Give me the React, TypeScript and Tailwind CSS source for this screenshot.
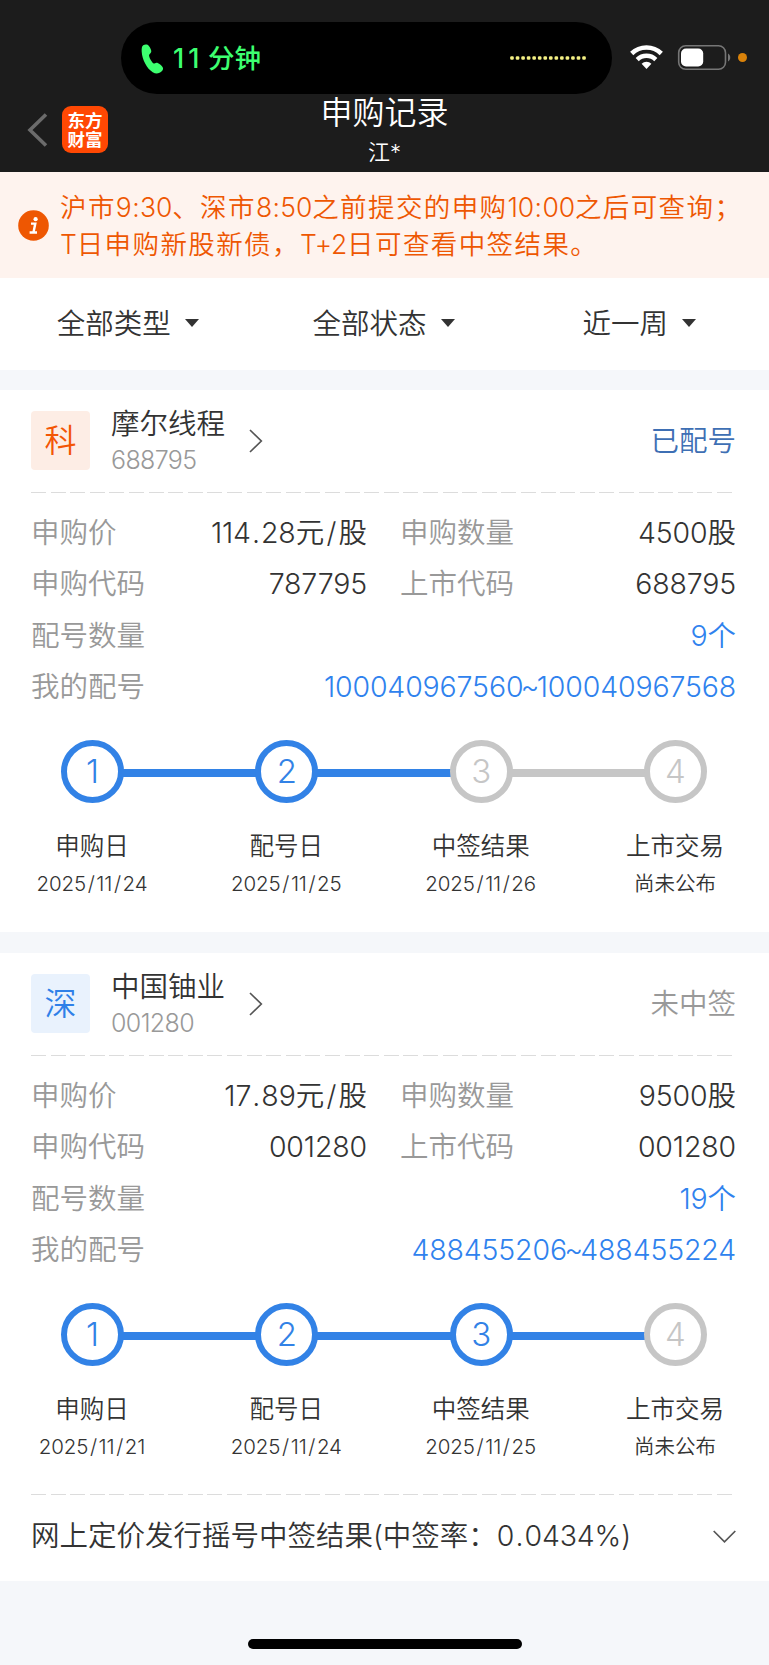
import { Fragment } from "react";

type Step = { label: string; date: string; done: boolean };
type Item = {
  badge: string;
  badgeClass: string;
  name: string;
  code: string;
  status: string;
  statusClass: string;
  price: string;
  amount: string;
  applyCode: string;
  listCode: string;
  count: string;
  numbers: string;
  steps: Step[];
  result?: string;
};

const items: Item[] = [
  {
    badge: "科",
    badgeClass: "bg-[#fdede5] text-[#f35605]",
    name: "摩尔线程",
    code: "688795",
    status: "已配号",
    statusClass: "text-[#3e6fb4]",
    price: "114.28元/股",
    amount: "4500股",
    applyCode: "787795",
    listCode: "688795",
    count: "9个",
    numbers: "100040967560~100040967568",
    steps: [
      { label: "申购日", date: "2025/11/24", done: true },
      { label: "配号日", date: "2025/11/25", done: true },
      { label: "中签结果", date: "2025/11/26", done: false },
      { label: "上市交易", date: "尚未公布", done: false },
    ],
  },
  {
    badge: "深",
    badgeClass: "bg-[#e9f2fd] text-[#2f80e8]",
    name: "中国铀业",
    code: "001280",
    status: "未中签",
    statusClass: "text-[#999999]",
    price: "17.89元/股",
    amount: "9500股",
    applyCode: "001280",
    listCode: "001280",
    count: "19个",
    numbers: "488455206~488455224",
    steps: [
      { label: "申购日", date: "2025/11/21", done: true },
      { label: "配号日", date: "2025/11/24", done: true },
      { label: "中签结果", date: "2025/11/25", done: true },
      { label: "上市交易", date: "尚未公布", done: false },
    ],
    result: "网上定价发行摇号中签结果(中签率：0.0434%)",
  },
];

const spacing: Record<string, string> = {
  "/": "mx-[0.08em]",
  ".": "mx-[0.04em]",
  ":": "mx-[0.02em]",
  "~": "-mx-[0.09em]",
};

/** Sets the spacing of the digits and marks in a mixed Chinese and Latin string. */
function Mixed({ text }: { text: string }) {
  return (
    <>
      {text.split(/([\x20-\x7e]+)/).map((part, i) =>
        i % 2 ? (
          <span key={i} className="tracking-[-0.005em]">
            {part.split(/([/.:~])/).map((piece, j) =>
              j % 2 ? (
                <span key={j} className={spacing[piece]}>
                  {piece}
                </span>
              ) : (
                <Fragment key={j}>{piece}</Fragment>
              ),
            )}
          </span>
        ) : (
          <Fragment key={i}>{part}</Fragment>
        ),
      )}
    </>
  );
}

function Dashes() {
  return (
    <div className="ml-[31px] h-px w-[701px] bg-[repeating-linear-gradient(90deg,#dcdcdc_0_15px,transparent_15px_19.6px)]" />
  );
}

function Header() {
  return (
    <header className="h-[172px] bg-[#1c1c1c] pt-[22px]">
      <div className="flex h-[72px] items-center pl-[121px]">
        <div className="flex h-[72px] w-[491px] items-center rounded-full bg-black pr-[26px] pl-[20px]">
          <svg className="mt-[2px] h-[30px] w-[23px]" viewBox="0 0 23 30" fill="#3dff70">
            <path d="M2.2 1.3C4 .1 6.500.1 7.900 1.900C9.200 3.600 10.200 5.700 10.300 7.300C10.400 8.700 8.700 9.700 8.100 10.900C7.600 12.400 10.800 18.600 12.700 19.400C14.100 19.900 15.200 18.600 16.600 18.900C18.600 19.500 20.700 21.600 21.700 23.200C22.700 24.900 21.500 26.900 19.900 28.100C17.700 29.700 14.500 29.900 11.700 28.200C5.900 24.800 1.100 15.600.700 7.800C.600 4.900.700 2.500 2.200 1.300Z" />
          </svg>
          <div className="ml-[9px] flex items-center text-[26.500px] leading-none font-medium whitespace-pre text-[#3dff70]">
            <span className="w-[35px] text-[27px] tracking-[4px]">11</span>
            <span>分钟</span>
          </div>
          <svg className="ml-auto h-[4px] w-[76px]" viewBox="0 0 76 4" fill="#f4f084">
            {Array.from({ length: 14 }, (_, i) => (
              <rect key={i} x={0.2 + i * 5.54} y="0.2" width="3.6" height="3.600" rx="1.200" />
            ))}
          </svg>
        </div>
        <svg className="-mt-[2px] ml-[18px] h-[25px] w-[33px]" viewBox="0 0 33 25" fill="none" stroke="#fff">
          <path d="M1.700 8.500A21.300 21.300 0 0 1 31.300 8.500" strokeWidth="4.600" />
          <path d="M7.200 14.600A13.300 13.300 0 0 1 25.800 14.600" strokeWidth="4.400" />
          <path d="M11.600 18.800A7 7 0 0 1 21.400 18.800L16.500 24Z" fill="#fff" stroke="none" />
        </svg>
        <svg className="-mt-[2px] ml-[14px] h-[27px] w-[55px]" viewBox="0 0 55 27">
          <rect x="1.700" y="1.700" width="46.800" height="23.600" rx="7" fill="none" stroke="#767676" strokeWidth="1.600" />
          <rect x="4" y="4.500" width="22.200" height="18" rx="5" fill="#fff" />
          <path d="M51 9.500C54 11.200 54 15.800 51 17.500Z" fill="#767676" />
        </svg>
        <div className="-mt-[2px] ml-[6px] size-[9px] rounded-full bg-[#d9820a]" />
      </div>
      <div className="grid h-[78px] grid-cols-3">
        <div className="flex items-start pt-[12px] pl-[27px]">
          <svg className="mt-[7px] h-[34px] w-[21px]" viewBox="0 0 21 34" fill="none" stroke="#6b6b6b" strokeWidth="3.600">
            <path d="M19 1.500L3 17L19 32.500" />
          </svg>
          <div className="ml-[14px] flex h-[47px] w-[46px] flex-col items-center justify-center rounded-[9px] bg-[#ff4803] text-[17.500px] leading-[19px] font-bold text-white">
            <span>东方</span>
            <span>财富</span>
          </div>
        </div>
        <div className="flex flex-col items-center text-white">
          <h1 className="mt-[2px] text-[32px] leading-[34px]">申购记录</h1>
          <p className="mt-[8px] text-[22px] leading-[28px]">江*</p>
        </div>
      </div>
    </header>
  );
}

function Notice() {
  return (
    <div className="flex h-[106px] items-center bg-[#fef3ee] text-[#ee5702]">
      <svg className="ml-[18px] h-[31px] w-[31px]" viewBox="0 0 31 31">
        <circle cx="15.500" cy="15.500" r="15.300" fill="#ee5702" />
        <circle cx="17.600" cy="9.200" r="2.100" fill="#fff" />
        <path d="M13 13.600H17.300L15.500 22.300M11.600 22.500H19" fill="none" stroke="#fff" strokeWidth="2.400" />
      </svg>
      <p className="mt-[2px] ml-[11px] text-[26.500px] leading-[37px] tracking-[1.400px] whitespace-nowrap">
        <Mixed text="沪市9:30、深市8:50之前提交的申购10:00之后可查询；" />
        <br />
        <Mixed text="T日申购新股新债，T+2日可查看中签结果。" />
      </p>
    </div>
  );
}

function Filters() {
  return (
    <div className="grid h-[92px] grid-cols-3 bg-white pr-[2px] text-[28.500px] leading-none text-[#333]">
      {["全部类型", "全部状态", "近一周"].map((name) => (
        <button key={name} className="flex items-center justify-center">
          <span>{name}</span>
          <svg className="-mt-[2px] ml-[14px] h-[8px] w-[14px]" viewBox="0 0 14 8" fill="#333">
            <path d="M0 0H14L7 8Z" />
          </svg>
        </button>
      ))}
    </div>
  );
}

function Field({ label, value, blue }: { label: string; value: string; blue?: boolean }) {
  return (
    <div className="flex h-[51.600px] items-center justify-between whitespace-nowrap">
      <span className="text-[#999]">{label}</span>
      <span className={blue ? "text-[#2f82ee]" : "text-[#333]"}>
        <Mixed text={value} />
      </span>
    </div>
  );
}

function Stepper({ steps }: { steps: Step[] }) {
  return (
    <div>
      <div className="flex h-[63px] items-center pr-[62px] pl-[61px]">
        {steps.map((step, i) => (
          <Fragment key={step.label}>
            {i > 0 && (
              <div className={`mt-[2px] -mx-px h-[8px] flex-1 ${steps[i - 1].done ? "bg-[#3282e6]" : "bg-[#c6c6c6]"}`} />
            )}
            <div
              className={`flex size-[63px] items-center justify-center rounded-full border-[6px] text-[33px] leading-none font-light ${
                step.done ? "border-[#3282e6] text-[#3282e6]" : "border-[#c6c6c6] text-[#c6c6c6]"
              }`}
            >
              {i + 1}
            </div>
          </Fragment>
        ))}
      </div>
      <div className="mt-[27px] flex justify-between pr-[4px] pl-[2px] text-[#333]">
        {steps.map((step) => (
          <div key={step.label} className="flex w-[180px] flex-col items-center">
            <span className="text-[24.500px] leading-[32px]">{step.label}</span>
            <span className="mt-[8px] text-[20.500px] leading-[28px]">
              <Mixed text={step.date} />
            </span>
          </div>
        ))}
      </div>
    </div>
  );
}

function Card({ item }: { item: Item }) {
  return (
    <section className={`bg-white pt-[21px] ${item.result ? "h-[628px]" : "h-[542px]"}`}>
      <div className="flex h-[59px] items-center pr-[33px] pl-[31px]">
        <div className={`flex size-[59px] items-center justify-center rounded-[4px] pt-px text-[32px] leading-none ${item.badgeClass}`}>
          {item.badge}
        </div>
        <div className="mt-[3px] ml-[21px]">
          <div className="text-[28.500px] leading-[36px] text-[#333]">{item.name}</div>
          <div className="text-[25px] leading-[36px] tracking-[-0.025em] text-[#999]">{item.code}</div>
        </div>
        <svg className="ml-[24px] h-[24px] w-[14px]" viewBox="0 0 14 24" fill="none" stroke="#555" strokeWidth="1.700">
          <path d="M1 1L12.300 12L1 23" />
        </svg>
        <div className={`mt-[2px] ml-auto text-[28.500px] leading-none ${item.statusClass}`}>{item.status}</div>
      </div>
      <div className="h-[22px]" />
      <Dashes />
      <div className="mt-[14px] pr-[33px] pl-[31px] text-[28.500px] leading-none">
        <div className="grid grid-cols-[336px_336px] justify-between">
          <Field label="申购价" value={item.price} />
          <Field label="申购数量" value={item.amount} />
          <Field label="申购代码" value={item.applyCode} />
          <Field label="上市代码" value={item.listCode} />
        </div>
        <Field label="配号数量" value={item.count} blue />
        <Field label="我的配号" value={item.numbers} blue />
      </div>
      <div className="mt-[27px]">
        <Stepper steps={item.steps} />
      </div>
      {item.result && (
        <div className="mt-[33px]">
          <Dashes />
          <div className="flex h-[82px] items-center justify-between pr-[33px] pl-[31px] text-[28.500px] leading-none text-[#333]">
            <span className="whitespace-nowrap">
              <Mixed text={item.result} />
            </span>
            <svg className="h-[13px] w-[23px]" viewBox="0 0 23 13" fill="none" stroke="#555" strokeWidth="1.700">
              <path d="M.700 1L11.500 11.800L22.300 1" />
            </svg>
          </div>
        </div>
      )}
    </section>
  );
}

export default function App() {
  return (
    <div className="flex h-[1665px] w-[769px] flex-col overflow-hidden bg-[#f5f7fa] font-['Inter','Noto_Sans_CJK_SC',sans-serif] font-[350]">
      <Header />
      <Notice />
      <Filters />
      <main className="mt-[20px] flex flex-col gap-[21px]">
        {items.map((item) => (
          <Card key={item.code} item={item} />
        ))}
      </main>
      <div className="mx-auto mt-auto mb-[16px] h-[10px] w-[274px] rounded-full bg-black" />
    </div>
  );
}
